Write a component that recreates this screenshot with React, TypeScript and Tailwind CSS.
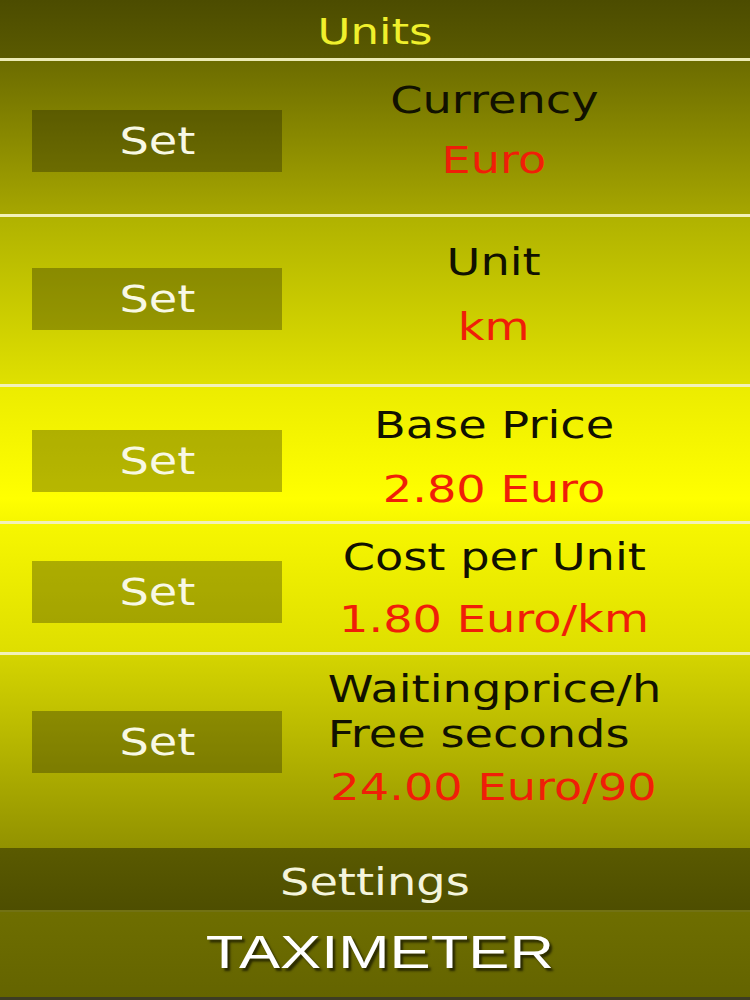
const rows = [
  { label: ['Currency'], value: 'Euro', box: 'h-[153px]', btn: 'mt-[49px]', text: 'pt-[17px]', gap: 'mt-[15px]' },
  { label: ['Unit'], value: 'km', box: 'h-[170px] border-t-[3px]', btn: 'mt-[51px]', text: 'pt-[23px]', gap: 'mt-[20px]' },
  { label: ['Base Price'], value: '2.80 Euro', box: 'h-[137px] border-t-[3px]', btn: 'mt-[43px]', text: 'pt-[16px]', gap: 'mt-[19px]' },
  { label: ['Cost per Unit'], value: '1.80 Euro/km', box: 'h-[131px] border-t-[3px]', btn: 'mt-[37px]', text: 'pt-[11px]', gap: 'mt-[17px]' },
  { label: ['Waitingprice/h', 'Free seconds'], value: '24.00 Euro/90', box: 'h-[196px] border-t-[3px]', btn: 'mt-[56px]', text: 'pt-[12px]', gap: 'mt-[8px]' },
]

function SetButton({ className }: { className: string }) {
  return (
    <button
      className={`${className} flex h-[62px] w-[250px] shrink-0 items-center justify-center bg-black/[0.28] text-[37px] leading-[45px] text-[#f8f8e4]`}
    >
      <span className="inline-block scale-x-[1.25]">Set</span>
    </button>
  )
}

export default function App() {
  return (
    <div className="h-[1000px] w-[750px] overflow-hidden font-['DejaVu_Sans',sans-serif]">
      {/* title bar */}
      <div className="h-[61px] border-b-[3px] border-[#ecebb4] bg-gradient-to-b from-[#4c4c00] to-[#5a5a00] pt-[9px] text-center text-[36px] leading-[45px] text-[#f0f02c]">
        <span className="inline-block scale-x-[1.25]">Units</span>
      </div>

      <div className="bg-[linear-gradient(to_bottom,#6c6c00_0%,#a6a600_19.4%,#b0b200_19.8%,#dfe000_41%,#ecec00_41.4%,#ffff00_55.6%,#f8f800_58%,#dede00_75.2%,#d4d400_75.6%,#929200_100%)]">
        {rows.map((r) => (
          <div key={r.value} className={`${r.box} flex items-start border-[#f2f1b8] pl-[32px] pr-[44px]`}>
            <SetButton className={r.btn} />
            <div className={`${r.text} flex flex-1 flex-col items-center text-[37px] leading-[45px]`}>
              <div className="inline-block scale-x-[1.25] whitespace-nowrap text-left text-[#111100]">
                {r.label.map((l) => (
                  <div key={l}>{l}</div>
                ))}
              </div>
              <div className={`${r.gap} inline-block scale-x-[1.25] whitespace-nowrap text-[#f01e08]`}>{r.value}</div>
            </div>
          </div>
        ))}
      </div>

      {/* bottom bars */}
      <div className="h-[64px] border-b-2 border-[#727214] bg-gradient-to-b from-[#5a5a00] to-[#4e4e00] pt-[12px] text-center text-[37px] leading-[45px] text-[#f4f4dc]">
        <span className="inline-block scale-x-[1.25]">Settings</span>
      </div>
      <div className="h-[88px] border-b-[3px] border-[#3c3c24] bg-gradient-to-b from-[#6e6e00] to-[#646400] pt-[14px] text-center font-['Liberation_Sans',sans-serif] text-[46px] leading-[52px] text-white">
        <span className="inline-block translate-x-[5px] scale-x-[1.34] [text-shadow:2px_3px_2px_rgba(0,0,0,0.6)]">TAXIMETER</span>
      </div>
    </div>
  )
}
